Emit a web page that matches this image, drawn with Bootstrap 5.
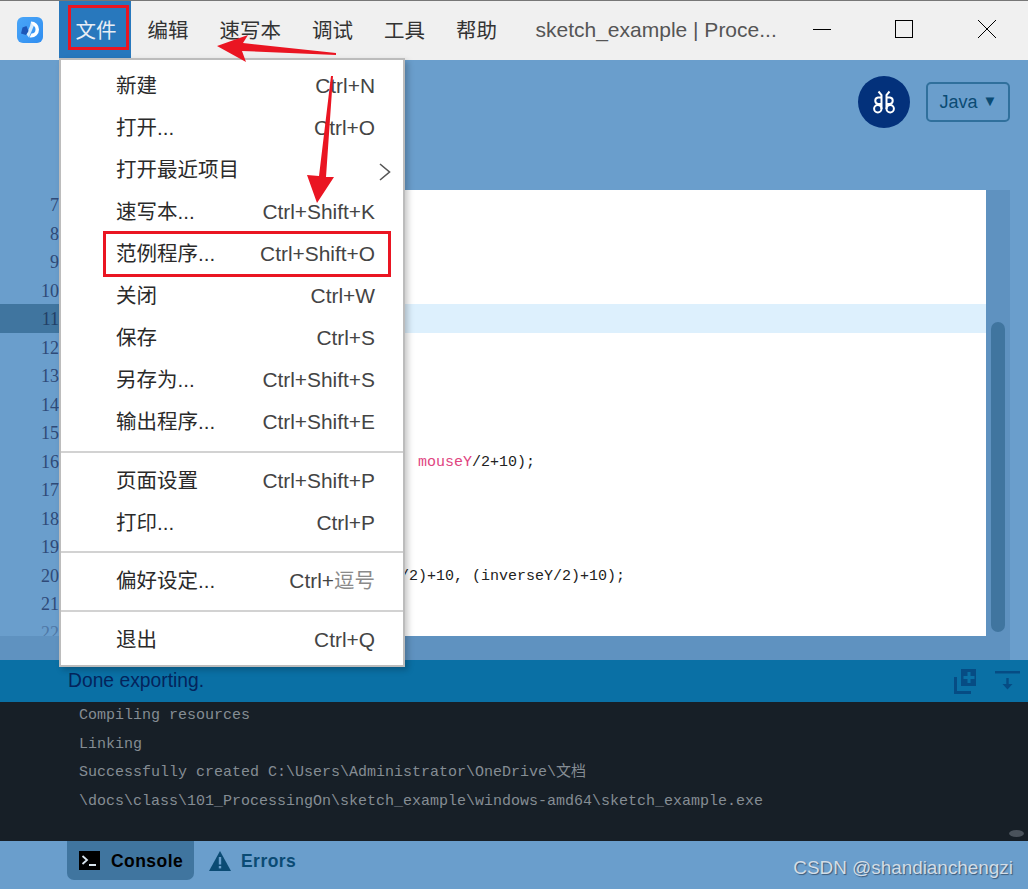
<!DOCTYPE html>
<html lang="zh">
<head>
<meta charset="utf-8">
<title>sketch_example | Processing</title>
<link href="https://cdn.jsdelivr.net/npm/bootstrap@5.3.0/dist/css/bootstrap.min.css" rel="stylesheet">
<style>
html,body{margin:0;height:889px;overflow:hidden;background:#6a9ecc}
.app{position:relative;width:1028px;height:889px;font-family:"Liberation Sans","Noto Sans CJK SC",sans-serif}
.titlebar{height:60px;background:#f0f0f0;border-top:1px solid #777;color:#333;font-size:20.5px}
.logo-wrap{width:59px}
.mitem{padding:0 14.5px 0 16.5px;height:57px;line-height:59px;white-space:nowrap;color:#333}
.mitem.on{background:#2878bd;color:#e8eef5}
.wintitle{font-size:21px;color:#555;margin-left:24px;white-space:nowrap;width:275px;padding-top:13px;line-height:31px}
.winbtns{width:196px}
.header{height:130px;background:#6a9ecc}
.modebtn{width:52px;height:52px;border-radius:50%;background:#03317b;margin:16px 16px 0 0}
.javabtn{width:84px;height:40px;margin:22px 18px 0 0;border:2px solid #30709c;border-radius:5px;color:#0b4b74;font-size:18px;background:transparent;padding:1px 0 0 1px}
.javabtn span{font-size:15px;margin-left:5px;position:relative;top:-2px}
.body-row{height:446px}
.mono{font-family:"Liberation Mono","Noto Sans CJK SC",monospace;font-size:15px}
.gutter{width:60px;color:#2f4a78;text-align:right;padding:0 1px 0 0;height:446px;overflow:hidden;font-family:"Liberation Serif",serif;font-size:18px}
.gline{height:28.5px;line-height:30px}
.gline.cur{background:#40759f;color:#223f66}
.gline.dim{opacity:.45}
.editor{width:926px;background:#fff;height:446px;overflow:hidden;color:#222}
.cline{height:28.5px;line-height:31.5px;padding-left:16px;white-space:pre}
.cline.cur{background:#ddf0fd}
.cline.ind-a{padding-left:358px}
.cline.ind-b{padding-left:340px}
.kw{color:#e0457f}
.vtrack{width:24px;background:#5f92c0;position:relative;padding:132px 5px 4px 5px}
.vthumb{height:100%;background:#40759f;border-radius:8px}
.vrest{width:18px}
.hbar{height:24px;background:#5f92c0;width:1010px}
.status{height:42px;background:#0a70a5;padding-left:68px;color:#04245c;font-size:19.3px}
.status svg{flex:none}
.ic-add{margin-right:19px}
.ic-exp{margin-right:8px}
.consolebox{height:139px;background:#171f27;color:#858d94;padding:0 0 0 79px;position:relative}
.conline{height:28.5px;line-height:28.8px;white-space:pre}
.cthumb{position:absolute;left:1009px;top:128px;width:15px;height:7px;border-radius:50%;background:#4a525b}
.footer{height:48px;background:#6a9ecc;padding-left:67px;font-weight:700;font-size:17.5px;letter-spacing:.45px}
.tab-on{width:127px;height:39px;background:#40759f;border-radius:0 0 7px 7px;color:#000;padding-left:12px;gap:11px}
.tab-off{color:#0b4b74;padding-left:15px;height:39px;gap:10px}
.tab-on span,.tab-off span{position:relative;top:1px}
.wmark{position:absolute;right:15px;bottom:7px;font-weight:400;font-size:18.9px;letter-spacing:0;color:#d3dde6;text-shadow:1px 1px 1px #3d5a78}
.menu-pop{position:absolute;left:59px;top:58px;width:346px;height:609px;display:block;background:#fff;border:2px solid #bcbcbc;border-radius:0;padding:5px 0 0;margin:0;box-shadow:3px 3px 6px rgba(0,0,0,.22);font-size:20.5px;z-index:5}
.menu-pop .dropdown-item{height:42px;line-height:42px;padding:0 28px 0 55px;color:#2a2a2a;background:transparent;justify-content:space-between}
.menu-pop .sc{font-size:20.9px;color:#444}
.menu-pop .sc i{font-style:normal;color:#8a8a8a;font-size:20.5px}
.menu-pop .dropdown-divider{margin:8px 0 7px;border-top:2px solid #d2d2d2;opacity:1}
.menu-pop .dropdown-divider.tight{margin:7px 0 7px}
.chev{position:absolute;right:12px;top:103px}
.redbox{position:absolute;border:3px solid #ea1522;z-index:6;pointer-events:none}
.rb1{left:68px;top:5px;width:61px;height:45px}
.rb2{left:103px;top:231px;width:288px;height:46px}
.arrows{position:absolute;left:0;top:0;z-index:7;pointer-events:none}
</style>
</head>
<body>
<div class="app">
  <div class="titlebar d-flex align-items-start">
    <div class="logo-wrap d-flex justify-content-center pt-3">
      <svg width="26" height="26" viewBox="0 0 26 26">
        <defs><linearGradient id="lg" x1="0" y1="0" x2="1" y2="1"><stop offset="0" stop-color="#4aa6f8"/><stop offset="1" stop-color="#2f8df0"/></linearGradient></defs>
        <rect width="26" height="26" rx="6" fill="url(#lg)"/>
        <path d="M14 4.5a8 8 0 0 1 0 16h-1.5l2-4a4 4 0 0 0 0-8h-1z" fill="#fff"/>
        <path d="M14.5 5.5l-5 12 2.5 3 4.5-11z" fill="#d5ebfd"/>
        <path d="M5.5 10.5l4-1.5 2 5-2.5 4-5-1.500z" fill="#1c56b8"/>
      </svg>
    </div>
    <div class="d-flex">
      <div class="mitem on">文件</div>
      <div class="mitem">编辑</div>
      <div class="mitem">速写本</div>
      <div class="mitem">调试</div>
      <div class="mitem">工具</div>
      <div class="mitem">帮助</div>
    </div>
    <div class="wintitle">sketch_example | Proce...</div>
    <div class="winbtns">
      <svg width="196" height="57" viewBox="0 0 196 57" fill="none" stroke="#000">
        <path d="M2 28.5h18"/>
        <rect x="84.500" y="19.5" width="17" height="17"/>
        <path d="M167 19l18 18M185 19l-18 18"/>
      </svg>
    </div>
  </div>

  <div class="header d-flex justify-content-end align-items-start">
    <div class="modebtn d-flex align-items-center justify-content-center">
      <svg width="24" height="24" viewBox="0 0 24 24" fill="none" stroke="#fff" stroke-width="2">
        <path d="M6.500 1.500l3 3.500V19"/><path d="M17.500 1.500l-3 3.500V19"/>
        <path d="M9.500 7.500H6a3.300 3.300 0 0 0 0 6.500h3.500"/><path d="M14.500 7.500H18a3.300 3.300 0 0 1 0 6.500h-3.500"/>
        <circle cx="5.800" cy="18.800" r="3.700"/><circle cx="18.200" cy="18.800" r="3.700"/>
      </svg>
    </div>
    <button class="javabtn btn" type="button">Java<span>▼</span></button>
  </div>

  <div class="body-row d-flex">
    <div class="gutter">
      <div class="gline">7</div><div class="gline">8</div><div class="gline">9</div><div class="gline">10</div><div class="gline cur">11</div><div class="gline">12</div><div class="gline">13</div><div class="gline">14</div><div class="gline">15</div><div class="gline">16</div><div class="gline">17</div><div class="gline">18</div><div class="gline">19</div><div class="gline">20</div><div class="gline">21</div><div class="gline dim">22</div>
    </div>
    <div class="editor mono">
      <div class="cline"> </div><div class="cline"> </div><div class="cline"> </div><div class="cline"> </div>
      <div class="cline cur"> </div>
      <div class="cline"> </div><div class="cline"> </div><div class="cline"> </div><div class="cline"> </div>
      <div class="cline ind-a"><span class="kw">mouseY</span>/2+10);</div>
      <div class="cline"> </div><div class="cline"> </div><div class="cline"> </div>
      <div class="cline ind-b">/2)+10, (inverseY/2)+10);</div>
      <div class="cline"> </div><div class="cline"> </div>
    </div>
    <div class="vtrack"><div class="vthumb"></div></div>
    <div class="vrest"></div>
  </div>
  <div class="hbar"></div>

  <div class="status d-flex align-items-center">
    <span class="flex-grow-1">Done exporting.</span>
    <svg width="22" height="25" viewBox="0 0 22 25" class="ic-add" fill="#064c84">
      <path d="M7 0h15v17H7zM13.500 3v4h-4v3h4v4h3v-4h4V7h-4V3z" fill-rule="evenodd"/>
      <path d="M0 8h3v14h14v3H0z"/>
    </svg>
    <svg width="25" height="20" viewBox="0 0 25 20" class="ic-exp" fill="#064c84">
      <rect x="0" y="0" width="25" height="2.500"/>
      <path d="M11.300 7h2.400v6h3.800l-5 5.500-5-5.500h3.800z"/>
    </svg>
  </div>

  <div class="consolebox mono">
    <div class="conline">Compiling resources</div>
    <div class="conline">Linking</div>
    <div class="conline">Successfully created C:\Users\Administrator\OneDrive\文档</div>
    <div class="conline">\docs\class\101_ProcessingOn\sketch_example\windows-amd64\sketch_example.exe</div>
    <div class="cthumb"></div>
  </div>

  <div class="footer d-flex align-items-start">
    <div class="tab-on d-flex align-items-center">
      <svg width="21" height="19" viewBox="0 0 21 19" class="flex-shrink-0">
        <rect width="21" height="19" fill="#000"/>
        <path d="M3.500 5l4.500 4-4.500 4" fill="none" stroke="#d8e4ee" stroke-width="1.800"/>
        <rect x="10" y="13" width="7" height="2" fill="#d8e4ee"/>
      </svg>
      <span>Console</span>
    </div>
    <div class="tab-off d-flex align-items-center">
      <svg width="22" height="20" viewBox="0 0 22 20" class="flex-shrink-0">
        <path d="M11 0L22 20H0z" fill="#0b4b74"/>
        <rect x="9.800" y="6" width="2.400" height="7.500" fill="#6a9ecc"/>
        <rect x="9.800" y="15" width="2.400" height="2.400" fill="#6a9ecc"/>
      </svg>
      <span>Errors</span>
    </div>
    <div class="wmark">CSDN @shandianchengzi</div>
  </div>

  <div class="dropdown-menu show menu-pop">
    <div class="dropdown-item d-flex"><span>新建</span><span class="sc">Ctrl+N</span></div>
    <div class="dropdown-item d-flex"><span>打开...</span><span class="sc">Ctrl+O</span></div>
    <div class="dropdown-item d-flex"><span>打开最近项目</span></div>
    <div class="dropdown-item d-flex"><span>速写本...</span><span class="sc">Ctrl+Shift+K</span></div>
    <div class="dropdown-item d-flex"><span>范例程序...</span><span class="sc">Ctrl+Shift+O</span></div>
    <div class="dropdown-item d-flex"><span>关闭</span><span class="sc">Ctrl+W</span></div>
    <div class="dropdown-item d-flex"><span>保存</span><span class="sc">Ctrl+S</span></div>
    <div class="dropdown-item d-flex"><span>另存为...</span><span class="sc">Ctrl+Shift+S</span></div>
    <div class="dropdown-item d-flex"><span>输出程序...</span><span class="sc">Ctrl+Shift+E</span></div>
    <hr class="dropdown-divider">
    <div class="dropdown-item d-flex"><span>页面设置</span><span class="sc">Ctrl+Shift+P</span></div>
    <div class="dropdown-item d-flex"><span>打印...</span><span class="sc">Ctrl+P</span></div>
    <hr class="dropdown-divider tight">
    <div class="dropdown-item d-flex"><span>偏好设定...</span><span class="sc">Ctrl+<i>逗号</i></span></div>
    <hr class="dropdown-divider">
    <div class="dropdown-item d-flex"><span>退出</span><span class="sc">Ctrl+Q</span></div>
    <svg class="chev" width="12" height="18" viewBox="0 0 12 18" fill="none" stroke="#555" stroke-width="1.600"><path d="M1 1l9.500 8L1 17"/></svg>
  </div>

  <div class="redbox rb1"></div>
  <div class="redbox rb2"></div>
  <svg class="arrows" width="1028" height="889" viewBox="0 0 1028 889" fill="#ea1522">
    <polygon points="217,46 248,35 243,43 336,53 336,55 242,51 246,62"/>
    <polygon points="331,76 333,76 326,177 334,177 317,203 307,175 319,176"/>
  </svg>
</div>
<script src="https://cdn.jsdelivr.net/npm/bootstrap@5.3.0/dist/js/bootstrap.bundle.min.js"></script>
</body>
</html>
